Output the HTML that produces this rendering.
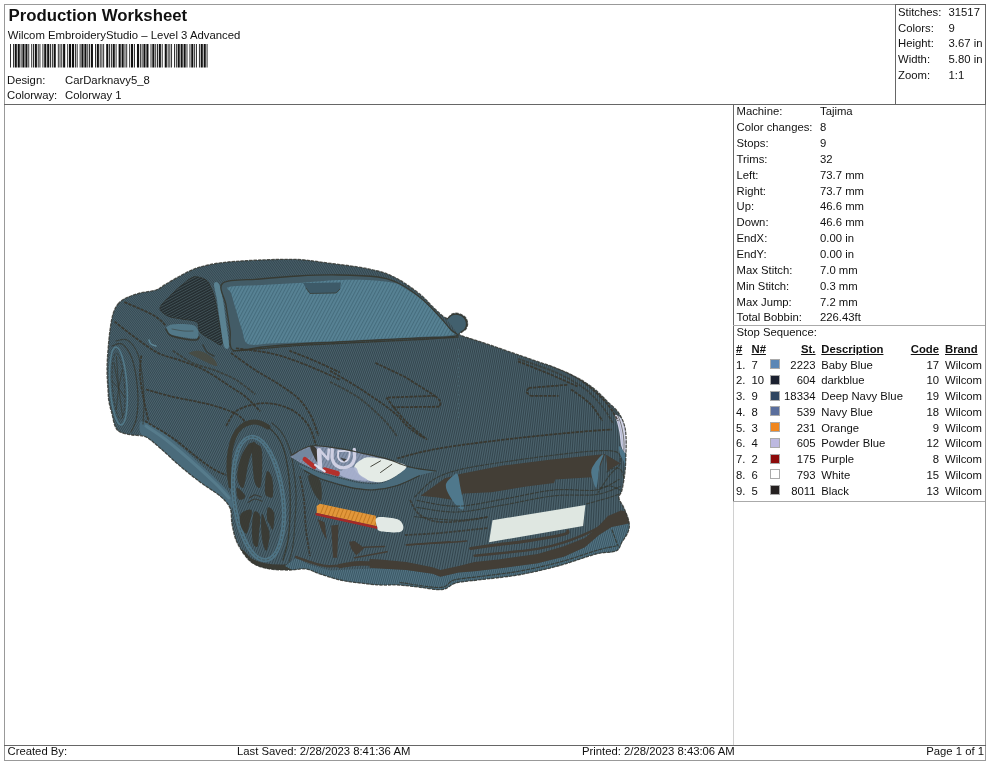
<!DOCTYPE html>
<html><head><meta charset="utf-8">
<style>
html,body{margin:0;padding:0;background:#fff;}
body{width:990px;height:762px;position:relative;overflow:hidden;font-family:"Liberation Sans",sans-serif;font-size:11.3px;color:#111;}
.t{position:absolute;white-space:nowrap;line-height:13px;}
#txt{position:absolute;left:0;top:0;width:990px;height:762px;will-change:transform;transform:translateZ(0);}
.ln{position:absolute;background:#999;}
.dk{background:#666;}
.b{font-weight:bold;}
.u{text-decoration:underline;}
.r{text-align:right;}
.sw{position:absolute;width:10px;height:10px;border:1px solid #aaa;box-sizing:border-box;}
</style></head><body>
<!-- frame lines -->
<div class="ln" style="left:4px;top:4px;width:982px;height:1px"></div>
<div class="ln" style="left:4px;top:4px;width:1px;height:757px"></div>
<div class="ln" style="left:985px;top:4px;width:1px;height:757px"></div>
<div class="ln dk" style="left:4px;top:104px;width:982px;height:1px"></div>
<div class="ln dk" style="left:895px;top:4px;width:1px;height:100px"></div>
<div class="ln dk" style="left:985px;top:4px;width:1px;height:100px"></div>
<div class="ln dk" style="left:895px;top:4px;width:91px;height:1px"></div>
<div class="ln dk" style="left:733px;top:104px;width:1px;height:398px"></div>
<div class="ln" style="left:733px;top:502px;width:1px;height:243px;background:#d0d0d0"></div>
<div class="ln" style="left:733px;top:325px;width:252px;height:1px;background:#aaa"></div>
<div class="ln" style="left:733px;top:501px;width:252px;height:1px;background:#aaa"></div>
<div class="ln dk" style="left:4px;top:745px;width:982px;height:1px"></div>
<div class="ln" style="left:4px;top:760px;width:982px;height:1px"></div>

<div id="txt">
<div class="t b" style="left:8.5px;top:5.5px;font-size:16.8px;line-height:19px">Production Worksheet</div>
<div class="t " style="left:7.7px;top:28.65px;font-size:11.35px">Wilcom EmbroideryStudio – Level 3 Advanced</div>
<div class="t " style="left:7px;top:73.55px;">Design:</div>
<div class="t " style="left:65px;top:73.55px;">CarDarknavy5_8</div>
<div class="t " style="left:7px;top:89.35px;">Colorway:</div>
<div class="t " style="left:65px;top:89.35px;">Colorway 1</div>
<svg width="220" height="30" viewBox="0 40 220 30" style="position:absolute;left:0;top:40px"><path d="M10.00,44h0.87v23.5h-0.87zM12.97,44h0.87v23.5h-0.87zM14.71,44h2.10v23.5h-2.10zM17.68,44h2.10v23.5h-2.10zM20.65,44h0.87v23.5h-0.87zM22.40,44h2.10v23.5h-2.10zM25.37,44h2.10v23.5h-2.10zM28.34,44h0.87v23.5h-0.87zM31.30,44h0.87v23.5h-0.87zM33.05,44h0.87v23.5h-0.87zM34.80,44h2.10v23.5h-2.10zM37.77,44h0.87v23.5h-0.87zM39.51,44h0.87v23.5h-0.87zM42.48,44h0.87v23.5h-0.87zM44.23,44h2.10v23.5h-2.10zM47.19,44h2.10v23.5h-2.10zM50.16,44h0.87v23.5h-0.87zM51.91,44h0.87v23.5h-0.87zM53.66,44h2.10v23.5h-2.10zM57.85,44h0.87v23.5h-0.87zM59.59,44h0.87v23.5h-0.87zM61.34,44h0.87v23.5h-0.87zM63.09,44h2.10v23.5h-2.10zM67.28,44h0.87v23.5h-0.87zM69.02,44h2.10v23.5h-2.10zM71.99,44h2.10v23.5h-2.10zM74.96,44h0.87v23.5h-0.87zM76.71,44h0.87v23.5h-0.87zM79.68,44h0.87v23.5h-0.87zM81.42,44h2.10v23.5h-2.10zM84.39,44h2.10v23.5h-2.10zM87.36,44h0.87v23.5h-0.87zM89.10,44h0.87v23.5h-0.87zM90.85,44h2.10v23.5h-2.10zM95.04,44h0.87v23.5h-0.87zM96.79,44h2.10v23.5h-2.10zM99.76,44h0.87v23.5h-0.87zM101.50,44h0.87v23.5h-0.87zM103.25,44h0.87v23.5h-0.87zM106.22,44h2.10v23.5h-2.10zM109.19,44h0.87v23.5h-0.87zM110.93,44h0.87v23.5h-0.87zM112.68,44h2.10v23.5h-2.10zM115.65,44h0.87v23.5h-0.87zM118.62,44h2.10v23.5h-2.10zM121.58,44h2.10v23.5h-2.10zM124.55,44h0.87v23.5h-0.87zM126.30,44h0.87v23.5h-0.87zM129.27,44h0.87v23.5h-0.87zM131.01,44h2.10v23.5h-2.10zM133.98,44h0.87v23.5h-0.87zM136.95,44h2.10v23.5h-2.10zM139.92,44h0.87v23.5h-0.87zM141.67,44h0.87v23.5h-0.87zM143.41,44h2.10v23.5h-2.10zM146.38,44h2.10v23.5h-2.10zM150.57,44h0.87v23.5h-0.87zM152.32,44h2.10v23.5h-2.10zM155.29,44h0.87v23.5h-0.87zM157.03,44h0.87v23.5h-0.87zM158.78,44h2.10v23.5h-2.10zM161.75,44h0.87v23.5h-0.87zM164.72,44h2.10v23.5h-2.10zM167.69,44h0.87v23.5h-0.87zM169.43,44h0.87v23.5h-0.87zM171.18,44h0.87v23.5h-0.87zM174.15,44h0.87v23.5h-0.87zM175.89,44h0.87v23.5h-0.87zM177.64,44h2.10v23.5h-2.10zM180.61,44h2.10v23.5h-2.10zM183.58,44h2.10v23.5h-2.10zM186.55,44h0.87v23.5h-0.87zM189.51,44h0.87v23.5h-0.87zM191.26,44h2.10v23.5h-2.10zM194.23,44h0.87v23.5h-0.87zM195.97,44h0.87v23.5h-0.87zM198.94,44h0.87v23.5h-0.87zM200.69,44h2.10v23.5h-2.10zM203.66,44h2.10v23.5h-2.10zM206.63,44h0.87v23.5h-0.87z" fill="#111"/></svg>
<div class="t " style="left:898px;top:5.65px;">Stitches:</div>
<div class="t " style="left:948.5px;top:5.65px;">31517</div>
<div class="t " style="left:898px;top:21.55px;">Colors:</div>
<div class="t " style="left:948.5px;top:21.55px;">9</div>
<div class="t " style="left:898px;top:37.45px;">Height:</div>
<div class="t " style="left:948.5px;top:37.45px;">3.67 in</div>
<div class="t " style="left:898px;top:53.35px;">Width:</div>
<div class="t " style="left:948.5px;top:53.35px;">5.80 in</div>
<div class="t " style="left:898px;top:69.25px;">Zoom:</div>
<div class="t " style="left:948.5px;top:69.25px;">1:1</div>
<div class="t " style="left:736.5px;top:105.15px;">Machine:</div>
<div class="t " style="left:820px;top:105.15px;">Tajima</div>
<div class="t " style="left:736.5px;top:121.02px;">Color changes:</div>
<div class="t " style="left:820px;top:121.02px;">8</div>
<div class="t " style="left:736.5px;top:136.89px;">Stops:</div>
<div class="t " style="left:820px;top:136.89px;">9</div>
<div class="t " style="left:736.5px;top:152.76px;">Trims:</div>
<div class="t " style="left:820px;top:152.76px;">32</div>
<div class="t " style="left:736.5px;top:168.63px;">Left:</div>
<div class="t " style="left:820px;top:168.63px;">73.7 mm</div>
<div class="t " style="left:736.5px;top:184.50px;">Right:</div>
<div class="t " style="left:820px;top:184.50px;">73.7 mm</div>
<div class="t " style="left:736.5px;top:200.37px;">Up:</div>
<div class="t " style="left:820px;top:200.37px;">46.6 mm</div>
<div class="t " style="left:736.5px;top:216.24px;">Down:</div>
<div class="t " style="left:820px;top:216.24px;">46.6 mm</div>
<div class="t " style="left:736.5px;top:232.11px;">EndX:</div>
<div class="t " style="left:820px;top:232.11px;">0.00 in</div>
<div class="t " style="left:736.5px;top:247.98px;">EndY:</div>
<div class="t " style="left:820px;top:247.98px;">0.00 in</div>
<div class="t " style="left:736.5px;top:263.85px;">Max Stitch:</div>
<div class="t " style="left:820px;top:263.85px;">7.0 mm</div>
<div class="t " style="left:736.5px;top:279.72px;">Min Stitch:</div>
<div class="t " style="left:820px;top:279.72px;">0.3 mm</div>
<div class="t " style="left:736.5px;top:295.59px;">Max Jump:</div>
<div class="t " style="left:820px;top:295.59px;">7.2 mm</div>
<div class="t " style="left:736.5px;top:311.46px;">Total Bobbin:</div>
<div class="t " style="left:820px;top:311.46px;">226.43ft</div>
<div class="t " style="left:736.5px;top:326.45px;">Stop Sequence:</div>
<div class="t b u" style="left:736px;top:343.15px;">#</div>
<div class="t b u" style="left:751.5px;top:343.15px;">N#</div>
<div class="t r b u" style="right:174.5px;top:343.15px;">St.</div>
<div class="t b u" style="left:821.3px;top:343.15px;">Description</div>
<div class="t r b u" style="right:51px;top:343.15px;">Code</div>
<div class="t b u" style="left:945px;top:343.15px;">Brand</div>
<div class="t " style="left:736px;top:358.55px;">1.</div>
<div class="t " style="left:751.5px;top:358.55px;">7</div>
<div class="sw" style="left:769.5px;top:359.00px;background:#5b86b5"></div>
<div class="t r " style="right:174.5px;top:358.55px;">2223</div>
<div class="t " style="left:821.3px;top:358.55px;">Baby Blue</div>
<div class="t r " style="right:51px;top:358.55px;">17</div>
<div class="t " style="left:945px;top:358.55px;">Wilcom</div>
<div class="t " style="left:736px;top:374.33px;">2.</div>
<div class="t " style="left:751.5px;top:374.33px;">10</div>
<div class="sw" style="left:769.5px;top:374.78px;background:#1c2130"></div>
<div class="t r " style="right:174.5px;top:374.33px;">604</div>
<div class="t " style="left:821.3px;top:374.33px;">darkblue</div>
<div class="t r " style="right:51px;top:374.33px;">10</div>
<div class="t " style="left:945px;top:374.33px;">Wilcom</div>
<div class="t " style="left:736px;top:390.11px;">3.</div>
<div class="t " style="left:751.5px;top:390.11px;">9</div>
<div class="sw" style="left:769.5px;top:390.56px;background:#2f4560"></div>
<div class="t r " style="right:174.5px;top:390.11px;">18334</div>
<div class="t " style="left:821.3px;top:390.11px;">Deep Navy Blue</div>
<div class="t r " style="right:51px;top:390.11px;">19</div>
<div class="t " style="left:945px;top:390.11px;">Wilcom</div>
<div class="t " style="left:736px;top:405.89px;">4.</div>
<div class="t " style="left:751.5px;top:405.89px;">8</div>
<div class="sw" style="left:769.5px;top:406.34px;background:#5a6e9c"></div>
<div class="t r " style="right:174.5px;top:405.89px;">539</div>
<div class="t " style="left:821.3px;top:405.89px;">Navy Blue</div>
<div class="t r " style="right:51px;top:405.89px;">18</div>
<div class="t " style="left:945px;top:405.89px;">Wilcom</div>
<div class="t " style="left:736px;top:421.67px;">5.</div>
<div class="t " style="left:751.5px;top:421.67px;">3</div>
<div class="sw" style="left:769.5px;top:422.12px;background:#f0861e"></div>
<div class="t r " style="right:174.5px;top:421.67px;">231</div>
<div class="t " style="left:821.3px;top:421.67px;">Orange</div>
<div class="t r " style="right:51px;top:421.67px;">9</div>
<div class="t " style="left:945px;top:421.67px;">Wilcom</div>
<div class="t " style="left:736px;top:437.45px;">6.</div>
<div class="t " style="left:751.5px;top:437.45px;">4</div>
<div class="sw" style="left:769.5px;top:437.90px;background:#bdb9e0"></div>
<div class="t r " style="right:174.5px;top:437.45px;">605</div>
<div class="t " style="left:821.3px;top:437.45px;">Powder Blue</div>
<div class="t r " style="right:51px;top:437.45px;">12</div>
<div class="t " style="left:945px;top:437.45px;">Wilcom</div>
<div class="t " style="left:736px;top:453.23px;">7.</div>
<div class="t " style="left:751.5px;top:453.23px;">2</div>
<div class="sw" style="left:769.5px;top:453.68px;background:#8c0a0a"></div>
<div class="t r " style="right:174.5px;top:453.23px;">175</div>
<div class="t " style="left:821.3px;top:453.23px;">Purple</div>
<div class="t r " style="right:51px;top:453.23px;">8</div>
<div class="t " style="left:945px;top:453.23px;">Wilcom</div>
<div class="t " style="left:736px;top:469.01px;">8.</div>
<div class="t " style="left:751.5px;top:469.01px;">6</div>
<div class="sw" style="left:769.5px;top:469.46px;background:#ffffff"></div>
<div class="t r " style="right:174.5px;top:469.01px;">793</div>
<div class="t " style="left:821.3px;top:469.01px;">White</div>
<div class="t r " style="right:51px;top:469.01px;">15</div>
<div class="t " style="left:945px;top:469.01px;">Wilcom</div>
<div class="t " style="left:736px;top:484.79px;">9.</div>
<div class="t " style="left:751.5px;top:484.79px;">5</div>
<div class="sw" style="left:769.5px;top:485.24px;background:#262222"></div>
<div class="t r " style="right:174.5px;top:484.79px;">8011</div>
<div class="t " style="left:821.3px;top:484.79px;">Black</div>
<div class="t r " style="right:51px;top:484.79px;">13</div>
<div class="t " style="left:945px;top:484.79px;">Wilcom</div>
<div class="t " style="left:7.5px;top:745.35px;">Created By:</div>
<div class="t " style="left:237px;top:745.35px;">Last Saved: 2/28/2023 8:41:36 AM</div>
<div class="t " style="left:582px;top:745.35px;">Printed: 2/28/2023 8:43:06 AM</div>
<div class="t r " style="right:6px;top:745.35px;">Page 1 of 1</div>
</div>
<svg width="990" height="762" viewBox="0 0 990 762" style="position:absolute;left:0;top:0">
<defs>
<pattern id="tw" width="2" height="8" patternUnits="userSpaceOnUse" patternTransform="rotate(15)"><rect x="0" width="1" height="8" fill="#1c2f38" opacity="0.55"/><rect x="1" width="1" height="8" fill="#86a6b0" opacity="0.28"/></pattern>
<pattern id="tw2" width="3" height="3" patternUnits="userSpaceOnUse" patternTransform="rotate(-62)"><rect y="0" width="3" height="1.1" fill="#000" opacity="0.13"/><rect y="1.6" width="3" height="0.8" fill="#fff" opacity="0.10"/></pattern>
<pattern id="st" width="2.4" height="2.4" patternUnits="userSpaceOnUse" patternTransform="rotate(-28)"><rect y="0" width="2.4" height="1.0" fill="#6b8a92" opacity="0.4"/></pattern>
<linearGradient id="lg" gradientUnits="userSpaceOnUse" x1="100" y1="300" x2="430" y2="420"><stop offset="0" stop-color="#6aa3bf" stop-opacity="0.05"/><stop offset="0.55" stop-color="#6aa3bf" stop-opacity="0.03"/><stop offset="1" stop-color="#6aa3bf" stop-opacity="0"/></linearGradient>
<clipPath id="bodyclip"><path d="M118.0,304.0C120.2,301.3 122.3,299.8 126.0,298.0C129.7,296.2 135.0,294.3 140.0,293.0C145.0,291.7 151.7,291.5 156.0,290.0C160.3,288.5 162.0,286.3 166.0,284.0C170.0,281.7 175.3,278.5 180.0,276.0C184.7,273.5 189.3,270.8 194.0,269.0C198.7,267.2 202.3,266.2 208.0,265.0C213.7,263.8 219.3,262.8 228.0,262.0C236.7,261.2 248.3,260.4 260.0,260.0C271.7,259.6 286.7,259.0 298.0,259.5C309.3,260.0 318.0,261.8 328.0,263.0C338.0,264.2 349.7,265.7 358.0,267.0C366.3,268.3 372.3,269.5 378.0,271.0C383.7,272.5 387.3,273.8 392.0,276.0C396.7,278.2 401.0,280.7 406.0,284.0C411.0,287.3 417.3,292.0 422.0,296.0C426.7,300.0 430.0,304.3 434.0,308.0C438.0,311.7 443.0,317.0 446.0,318.0C449.0,319.0 450.0,314.8 452.0,314.0C454.0,313.2 455.8,313.0 458.0,313.5C460.2,314.0 463.4,315.4 465.0,317.0C466.6,318.6 467.4,321.0 467.6,323.0C467.8,325.0 466.9,327.5 466.0,329.0C465.1,330.5 463.0,331.0 462.0,332.0C461.0,333.0 457.3,333.5 460.0,335.0C462.7,336.5 472.0,339.0 478.0,341.0C484.0,343.0 489.7,344.8 496.0,347.0C502.3,349.2 509.3,351.7 516.0,354.0C522.7,356.3 529.3,358.7 536.0,361.0C542.7,363.3 549.3,365.3 556.0,368.0C562.7,370.7 570.0,373.8 576.0,377.0C582.0,380.2 587.7,383.8 592.0,387.0C596.3,390.2 599.3,393.5 602.0,396.0C604.7,398.5 605.3,399.3 608.0,402.0C610.7,404.7 615.3,408.3 618.0,412.0C620.7,415.7 622.7,420.0 624.0,424.0C625.3,428.0 625.7,431.3 626.0,436.0C626.3,440.7 626.2,446.0 626.0,452.0C625.8,458.0 625.7,465.7 625.0,472.0C624.3,478.3 623.0,485.7 622.0,490.0C621.0,494.3 618.7,495.0 619.0,498.0C619.3,501.0 622.3,504.0 624.0,508.0C625.7,512.0 628.3,518.0 629.0,522.0C629.7,526.0 629.2,528.7 628.0,532.0C626.8,535.3 624.0,538.8 622.0,542.0C620.0,545.2 620.3,549.0 616.0,551.0C611.7,553.0 605.7,551.5 596.0,554.0C586.3,556.5 571.0,562.5 558.0,566.0C545.0,569.5 531.3,572.7 518.0,575.0C504.7,577.3 488.3,578.7 478.0,580.0C467.7,581.3 462.0,581.4 456.0,583.0C450.0,584.6 448.3,588.9 442.0,589.6C435.7,590.3 425.3,587.8 418.0,587.0C410.7,586.2 404.3,585.3 398.0,585.0C391.7,584.7 386.3,585.3 380.0,585.0C373.7,584.7 366.7,583.8 360.0,583.0C353.3,582.2 346.7,581.5 340.0,580.0C333.3,578.5 325.7,575.8 320.0,574.0C314.3,572.2 311.0,569.7 306.0,569.0C301.0,568.3 296.0,570.0 290.0,570.0C284.0,570.0 276.0,570.0 270.0,569.0C264.0,568.0 258.3,566.5 254.0,564.0C249.7,561.5 247.0,558.0 244.0,554.0C241.0,550.0 238.0,545.0 236.0,540.0C234.0,535.0 233.0,529.3 232.0,524.0C231.0,518.7 232.0,512.7 230.0,508.0C228.0,503.3 225.0,500.3 220.0,496.0C215.0,491.7 206.7,487.0 200.0,482.0C193.3,477.0 186.7,471.7 180.0,466.0C173.3,460.3 165.7,452.8 160.0,448.0C154.3,443.2 150.7,439.2 146.0,437.0C141.3,434.8 136.3,435.8 132.0,435.0C127.7,434.2 122.8,433.5 120.0,432.0C117.2,430.5 116.3,429.0 115.0,426.0C113.7,423.0 113.0,418.0 112.0,414.0C111.0,410.0 109.7,406.0 109.0,402.0C108.3,398.0 108.3,395.3 108.0,390.0C107.7,384.7 107.0,376.7 107.0,370.0C107.0,363.3 107.5,356.7 108.0,350.0C108.5,343.3 109.2,336.0 110.0,330.0C110.8,324.0 111.7,318.3 113.0,314.0C114.3,309.7 115.8,306.7 118.0,304.0Z"/></clipPath>
</defs>
<path d="M118.0,304.0C120.2,301.3 122.3,299.8 126.0,298.0C129.7,296.2 135.0,294.3 140.0,293.0C145.0,291.7 151.7,291.5 156.0,290.0C160.3,288.5 162.0,286.3 166.0,284.0C170.0,281.7 175.3,278.5 180.0,276.0C184.7,273.5 189.3,270.8 194.0,269.0C198.7,267.2 202.3,266.2 208.0,265.0C213.7,263.8 219.3,262.8 228.0,262.0C236.7,261.2 248.3,260.4 260.0,260.0C271.7,259.6 286.7,259.0 298.0,259.5C309.3,260.0 318.0,261.8 328.0,263.0C338.0,264.2 349.7,265.7 358.0,267.0C366.3,268.3 372.3,269.5 378.0,271.0C383.7,272.5 387.3,273.8 392.0,276.0C396.7,278.2 401.0,280.7 406.0,284.0C411.0,287.3 417.3,292.0 422.0,296.0C426.7,300.0 430.0,304.3 434.0,308.0C438.0,311.7 443.0,317.0 446.0,318.0C449.0,319.0 450.0,314.8 452.0,314.0C454.0,313.2 455.8,313.0 458.0,313.5C460.2,314.0 463.4,315.4 465.0,317.0C466.6,318.6 467.4,321.0 467.6,323.0C467.8,325.0 466.9,327.5 466.0,329.0C465.1,330.5 463.0,331.0 462.0,332.0C461.0,333.0 457.3,333.5 460.0,335.0C462.7,336.5 472.0,339.0 478.0,341.0C484.0,343.0 489.7,344.8 496.0,347.0C502.3,349.2 509.3,351.7 516.0,354.0C522.7,356.3 529.3,358.7 536.0,361.0C542.7,363.3 549.3,365.3 556.0,368.0C562.7,370.7 570.0,373.8 576.0,377.0C582.0,380.2 587.7,383.8 592.0,387.0C596.3,390.2 599.3,393.5 602.0,396.0C604.7,398.5 605.3,399.3 608.0,402.0C610.7,404.7 615.3,408.3 618.0,412.0C620.7,415.7 622.7,420.0 624.0,424.0C625.3,428.0 625.7,431.3 626.0,436.0C626.3,440.7 626.2,446.0 626.0,452.0C625.8,458.0 625.7,465.7 625.0,472.0C624.3,478.3 623.0,485.7 622.0,490.0C621.0,494.3 618.7,495.0 619.0,498.0C619.3,501.0 622.3,504.0 624.0,508.0C625.7,512.0 628.3,518.0 629.0,522.0C629.7,526.0 629.2,528.7 628.0,532.0C626.8,535.3 624.0,538.8 622.0,542.0C620.0,545.2 620.3,549.0 616.0,551.0C611.7,553.0 605.7,551.5 596.0,554.0C586.3,556.5 571.0,562.5 558.0,566.0C545.0,569.5 531.3,572.7 518.0,575.0C504.7,577.3 488.3,578.7 478.0,580.0C467.7,581.3 462.0,581.4 456.0,583.0C450.0,584.6 448.3,588.9 442.0,589.6C435.7,590.3 425.3,587.8 418.0,587.0C410.7,586.2 404.3,585.3 398.0,585.0C391.7,584.7 386.3,585.3 380.0,585.0C373.7,584.7 366.7,583.8 360.0,583.0C353.3,582.2 346.7,581.5 340.0,580.0C333.3,578.5 325.7,575.8 320.0,574.0C314.3,572.2 311.0,569.7 306.0,569.0C301.0,568.3 296.0,570.0 290.0,570.0C284.0,570.0 276.0,570.0 270.0,569.0C264.0,568.0 258.3,566.5 254.0,564.0C249.7,561.5 247.0,558.0 244.0,554.0C241.0,550.0 238.0,545.0 236.0,540.0C234.0,535.0 233.0,529.3 232.0,524.0C231.0,518.7 232.0,512.7 230.0,508.0C228.0,503.3 225.0,500.3 220.0,496.0C215.0,491.7 206.7,487.0 200.0,482.0C193.3,477.0 186.7,471.7 180.0,466.0C173.3,460.3 165.7,452.8 160.0,448.0C154.3,443.2 150.7,439.2 146.0,437.0C141.3,434.8 136.3,435.8 132.0,435.0C127.7,434.2 122.8,433.5 120.0,432.0C117.2,430.5 116.3,429.0 115.0,426.0C113.7,423.0 113.0,418.0 112.0,414.0C111.0,410.0 109.7,406.0 109.0,402.0C108.3,398.0 108.3,395.3 108.0,390.0C107.7,384.7 107.0,376.7 107.0,370.0C107.0,363.3 107.5,356.7 108.0,350.0C108.5,343.3 109.2,336.0 110.0,330.0C110.8,324.0 111.7,318.3 113.0,314.0C114.3,309.7 115.8,306.7 118.0,304.0Z" fill="#4b626c"/>
<g clip-path="url(#bodyclip)"><path d="M-146.05,595L122.55,255M-143.41,595L124.29,255M-140.78,595L126.02,255M-138.14,595L127.76,255M-135.50,595L129.49,255M-132.87,595L131.23,255M-130.23,595L132.96,255M-127.59,595L134.70,255M-124.96,595L136.44,255M-122.32,595L138.17,255M-119.68,595L139.91,255M-117.05,595L141.64,255M-114.41,595L143.38,255M-111.77,595L145.11,255M-109.14,595L146.85,255M-106.50,595L148.59,255M-103.86,595L150.32,255M-101.23,595L152.06,255M-98.59,595L153.79,255M-95.95,595L155.53,255M-93.31,595L157.27,255M-90.68,595L159.00,255M-88.04,595L160.74,255M-85.40,595L162.47,255M-82.77,595L164.21,255M-80.13,595L165.94,255M-77.49,595L167.68,255M-74.86,595L169.42,255M-72.22,595L171.15,255M-69.58,595L172.89,255M-66.95,595L174.62,255M-64.31,595L176.36,255M-61.67,595L178.09,255M-59.04,595L179.83,255M-56.40,595L181.57,255M-53.76,595L183.30,255M-51.13,595L185.04,255M-48.49,595L186.77,255M-45.85,595L188.51,255M-43.22,595L190.24,255M-40.58,595L191.98,255M-37.94,595L193.72,255M-35.31,595L195.45,255M-32.67,595L197.19,255M-30.03,595L198.92,255M-27.40,595L200.66,255M-24.76,595L202.39,255M-22.12,595L204.13,255M-19.49,595L205.87,255M-16.85,595L207.60,255M-14.21,595L209.34,255M-11.58,595L211.07,255M-8.94,595L212.81,255M-6.30,595L214.54,255M-3.67,595L216.28,255M-1.03,595L218.02,255M1.61,595L219.75,255M4.24,595L221.49,255M6.88,595L223.22,255M9.52,595L224.96,255M12.16,595L226.70,255M14.79,595L228.43,255M17.43,595L230.17,255M20.07,595L231.90,255M22.70,595L233.64,255M25.34,595L235.37,255M27.98,595L237.11,255M30.61,595L238.85,255M33.25,595L240.58,255M35.89,595L242.32,255M38.52,595L244.05,255M41.16,595L245.79,255M43.80,595L247.52,255M46.43,595L249.26,255M49.07,595L251.00,255M51.71,595L252.73,255M54.34,595L254.47,255M56.98,595L256.20,255M59.62,595L257.94,255M62.25,595L259.67,255M64.89,595L261.41,255M67.53,595L263.15,255M70.16,595L264.88,255M72.80,595L266.62,255M75.44,595L268.35,255M78.07,595L270.09,255M80.71,595L271.82,255M83.35,595L273.56,255M85.98,595L275.30,255M88.62,595L277.03,255M91.26,595L278.77,255M93.89,595L280.50,255M96.53,595L282.24,255M99.17,595L283.97,255M101.80,595L285.71,255M104.44,595L287.45,255M107.08,595L289.18,255M109.71,595L290.92,255M112.35,595L292.65,255M114.99,595L294.39,255M117.63,595L296.13,255M120.26,595L297.86,255M122.90,595L299.60,255M125.54,595L301.33,255M128.17,595L303.07,255M130.81,595L304.80,255M133.45,595L306.54,255M136.08,595L308.28,255M138.72,595L310.01,255M141.36,595L311.75,255M143.99,595L313.48,255M146.63,595L315.22,255M149.27,595L316.95,255M151.90,595L318.69,255M154.54,595L320.43,255M157.18,595L322.16,255M159.81,595L323.90,255M162.45,595L325.63,255M165.09,595L327.37,255M167.72,595L329.10,255M170.36,595L330.84,255M173.00,595L332.58,255M175.63,595L334.31,255M178.27,595L336.05,255M180.91,595L337.78,255M183.54,595L339.52,255M186.18,595L341.25,255M188.82,595L342.99,255M191.45,595L344.73,255M194.09,595L346.46,255M196.73,595L348.20,255M199.36,595L349.93,255M202.00,595L351.67,255M204.64,595L353.40,255M207.27,595L355.14,255M209.91,595L356.88,255M212.55,595L358.61,255M215.18,595L360.35,255M217.82,595L362.08,255M220.46,595L363.82,255M223.10,595L365.56,255M225.73,595L367.29,255M228.37,595L369.03,255M231.01,595L370.76,255M233.64,595L372.50,255M236.28,595L374.23,255M238.92,595L375.97,255M241.55,595L377.71,255M244.19,595L379.44,255M246.83,595L381.18,255M249.46,595L382.91,255M252.10,595L384.65,255M254.74,595L386.38,255M257.37,595L388.12,255M260.01,595L389.86,255M262.65,595L391.59,255M265.28,595L393.33,255M267.92,595L395.06,255M270.56,595L396.80,255M273.19,595L398.53,255M275.83,595L400.27,255M278.47,595L402.01,255M281.10,595L403.74,255M283.74,595L405.48,255M286.38,595L407.21,255M289.01,595L408.95,255M291.65,595L410.68,255M294.29,595L412.42,255M296.92,595L414.16,255M299.56,595L415.89,255M302.20,595L417.63,255M304.83,595L419.36,255M307.47,595L421.10,255M310.11,595L422.83,255M312.74,595L424.57,255M315.38,595L426.31,255M318.02,595L428.04,255M320.65,595L429.78,255M323.29,595L431.51,255M325.93,595L433.25,255M328.56,595L434.98,255M331.20,595L436.72,255M333.84,595L438.46,255M336.48,595L440.19,255M339.11,595L441.93,255M341.75,595L443.66,255M344.39,595L445.40,255M347.02,595L447.14,255M349.66,595L448.87,255M352.30,595L450.61,255M354.93,595L452.34,255M357.57,595L454.08,255M360.21,595L455.81,255M362.84,595L457.55,255M365.48,595L459.29,255M368.12,595L461.02,255M370.75,595L462.76,255M373.39,595L464.49,255M376.03,595L466.23,255M378.66,595L467.96,255M381.30,595L469.70,255M383.94,595L471.44,255M386.57,595L473.17,255M389.21,595L474.91,255M391.85,595L476.64,255M394.48,595L478.38,255M397.12,595L480.11,255M399.76,595L481.85,255M402.39,595L483.59,255M405.03,595L485.32,255M407.67,595L487.06,255M410.30,595L488.79,255M412.94,595L490.53,255M415.58,595L492.26,255M418.21,595L494.00,255M420.85,595L495.74,255M423.49,595L497.47,255M426.12,595L499.21,255M428.76,595L500.94,255M431.40,595L502.68,255M434.03,595L504.41,255M436.67,595L506.15,255M439.31,595L507.89,255M441.95,595L509.62,255M444.58,595L511.36,255M447.22,595L513.09,255M449.86,595L514.83,255M452.49,595L516.57,255M455.13,595L518.30,255M457.77,595L520.04,255M460.40,595L521.77,255M463.04,595L523.51,255M465.68,595L525.24,255M468.31,595L526.98,255M470.95,595L528.72,255M473.59,595L530.45,255M476.22,595L532.19,255M478.86,595L533.92,255M481.50,595L535.66,255M484.13,595L537.39,255M486.77,595L539.13,255M489.41,595L540.87,255M492.04,595L542.60,255M494.68,595L544.34,255M497.32,595L546.07,255M499.95,595L547.81,255M502.59,595L549.54,255M505.23,595L551.28,255M507.86,595L553.02,255M510.50,595L554.75,255M513.14,595L556.49,255M515.77,595L558.22,255M518.41,595L559.96,255M521.05,595L561.69,255M523.68,595L563.43,255M526.32,595L565.17,255M528.96,595L566.90,255M531.59,595L568.64,255M534.23,595L570.37,255M536.87,595L572.11,255M539.50,595L573.84,255M542.14,595L575.58,255M544.78,595L577.32,255M547.42,595L579.05,255M550.05,595L580.79,255M552.69,595L582.52,255M555.33,595L584.26,255M557.96,595L586.00,255M560.60,595L587.73,255M563.24,595L589.47,255M565.87,595L591.20,255M568.51,595L592.94,255M571.15,595L594.67,255M573.78,595L596.41,255M576.42,595L598.15,255M579.06,595L599.88,255M581.69,595L601.62,255M584.33,595L603.35,255M586.97,595L605.09,255M589.60,595L606.82,255M592.24,595L608.56,255M594.88,595L610.30,255M597.51,595L612.03,255M600.15,595L613.77,255M602.79,595L615.50,255M605.42,595L617.24,255M608.06,595L618.97,255M610.70,595L620.71,255M613.33,595L622.45,255M615.97,595L624.18,255M618.61,595L625.92,255M621.24,595L627.65,255M623.88,595L629.39,255M626.52,595L631.12,255M629.15,595L632.86,255M631.79,595L634.60,255M634.43,595L636.33,255M637.06,595L638.07,255M639.70,595L639.80,255" stroke="#1e2a30" stroke-width="1" opacity="0.5" fill="none"/></g>
<path d="M118.0,304.0C120.2,301.3 122.3,299.8 126.0,298.0C129.7,296.2 135.0,294.3 140.0,293.0C145.0,291.7 151.7,291.5 156.0,290.0C160.3,288.5 162.0,286.3 166.0,284.0C170.0,281.7 175.3,278.5 180.0,276.0C184.7,273.5 189.3,270.8 194.0,269.0C198.7,267.2 202.3,266.2 208.0,265.0C213.7,263.8 219.3,262.8 228.0,262.0C236.7,261.2 248.3,260.4 260.0,260.0C271.7,259.6 286.7,259.0 298.0,259.5C309.3,260.0 318.0,261.8 328.0,263.0C338.0,264.2 349.7,265.7 358.0,267.0C366.3,268.3 372.3,269.5 378.0,271.0C383.7,272.5 387.3,273.8 392.0,276.0C396.7,278.2 401.0,280.7 406.0,284.0C411.0,287.3 417.3,292.0 422.0,296.0C426.7,300.0 430.0,304.3 434.0,308.0C438.0,311.7 443.0,317.0 446.0,318.0C449.0,319.0 450.0,314.8 452.0,314.0C454.0,313.2 455.8,313.0 458.0,313.5C460.2,314.0 463.4,315.4 465.0,317.0C466.6,318.6 467.4,321.0 467.6,323.0C467.8,325.0 466.9,327.5 466.0,329.0C465.1,330.5 463.0,331.0 462.0,332.0C461.0,333.0 457.3,333.5 460.0,335.0C462.7,336.5 472.0,339.0 478.0,341.0C484.0,343.0 489.7,344.8 496.0,347.0C502.3,349.2 509.3,351.7 516.0,354.0C522.7,356.3 529.3,358.7 536.0,361.0C542.7,363.3 549.3,365.3 556.0,368.0C562.7,370.7 570.0,373.8 576.0,377.0C582.0,380.2 587.7,383.8 592.0,387.0C596.3,390.2 599.3,393.5 602.0,396.0C604.7,398.5 605.3,399.3 608.0,402.0C610.7,404.7 615.3,408.3 618.0,412.0C620.7,415.7 622.7,420.0 624.0,424.0C625.3,428.0 625.7,431.3 626.0,436.0C626.3,440.7 626.2,446.0 626.0,452.0C625.8,458.0 625.7,465.7 625.0,472.0C624.3,478.3 623.0,485.7 622.0,490.0C621.0,494.3 618.7,495.0 619.0,498.0C619.3,501.0 622.3,504.0 624.0,508.0C625.7,512.0 628.3,518.0 629.0,522.0C629.7,526.0 629.2,528.7 628.0,532.0C626.8,535.3 624.0,538.8 622.0,542.0C620.0,545.2 620.3,549.0 616.0,551.0C611.7,553.0 605.7,551.5 596.0,554.0C586.3,556.5 571.0,562.5 558.0,566.0C545.0,569.5 531.3,572.7 518.0,575.0C504.7,577.3 488.3,578.7 478.0,580.0C467.7,581.3 462.0,581.4 456.0,583.0C450.0,584.6 448.3,588.9 442.0,589.6C435.7,590.3 425.3,587.8 418.0,587.0C410.7,586.2 404.3,585.3 398.0,585.0C391.7,584.7 386.3,585.3 380.0,585.0C373.7,584.7 366.7,583.8 360.0,583.0C353.3,582.2 346.7,581.5 340.0,580.0C333.3,578.5 325.7,575.8 320.0,574.0C314.3,572.2 311.0,569.7 306.0,569.0C301.0,568.3 296.0,570.0 290.0,570.0C284.0,570.0 276.0,570.0 270.0,569.0C264.0,568.0 258.3,566.5 254.0,564.0C249.7,561.5 247.0,558.0 244.0,554.0C241.0,550.0 238.0,545.0 236.0,540.0C234.0,535.0 233.0,529.3 232.0,524.0C231.0,518.7 232.0,512.7 230.0,508.0C228.0,503.3 225.0,500.3 220.0,496.0C215.0,491.7 206.7,487.0 200.0,482.0C193.3,477.0 186.7,471.7 180.0,466.0C173.3,460.3 165.7,452.8 160.0,448.0C154.3,443.2 150.7,439.2 146.0,437.0C141.3,434.8 136.3,435.8 132.0,435.0C127.7,434.2 122.8,433.5 120.0,432.0C117.2,430.5 116.3,429.0 115.0,426.0C113.7,423.0 113.0,418.0 112.0,414.0C111.0,410.0 109.7,406.0 109.0,402.0C108.3,398.0 108.3,395.3 108.0,390.0C107.7,384.7 107.0,376.7 107.0,370.0C107.0,363.3 107.5,356.7 108.0,350.0C108.5,343.3 109.2,336.0 110.0,330.0C110.8,324.0 111.7,318.3 113.0,314.0C114.3,309.7 115.8,306.7 118.0,304.0Z" fill="url(#lg)"/>
<g clip-path="url(#bodyclip)">
<path d="M142.0,421.0C145.3,420.7 153.7,425.8 160.0,430.0C166.3,434.2 173.3,440.3 180.0,446.0C186.7,451.7 193.3,457.8 200.0,464.0C206.7,470.2 215.0,477.8 220.0,483.0C225.0,488.2 228.0,490.8 230.0,495.0C232.0,499.2 233.7,507.7 232.0,508.0C230.3,508.3 225.3,501.2 220.0,497.0C214.7,492.8 206.7,488.0 200.0,483.0C193.3,478.0 186.7,472.7 180.0,467.0C173.3,461.3 165.7,453.8 160.0,449.0C154.3,444.2 149.3,440.8 146.0,438.0C142.7,435.2 140.7,434.8 140.0,432.0C139.3,429.2 138.7,421.3 142.0,421.0Z" fill="#4a6b7b" opacity="1" />
<path d="M146.0,426.0C149.2,428.2 157.7,433.3 165.0,439.0C172.3,444.7 181.7,452.7 190.0,460.0C198.3,467.3 208.5,476.7 215.0,483.0C221.5,489.3 226.7,495.5 229.0,498.0" fill="none" stroke="#5b8293" stroke-width="3.0" opacity="0.7" stroke-linecap="round" stroke-linejoin="round"/>
<path d="M194.0,277.0C198.0,276.2 203.2,278.2 206.0,280.0C208.8,281.8 209.5,284.7 211.0,288.0C212.5,291.3 213.7,294.3 215.0,300.0C216.3,305.7 217.8,314.7 219.0,322.0C220.2,329.3 223.2,341.0 222.0,344.0C220.8,347.0 215.7,342.0 212.0,340.0C208.3,338.0 202.5,335.0 200.0,332.0C197.5,329.0 200.0,324.2 197.0,322.0C194.0,319.8 186.8,320.0 182.0,319.0C177.2,318.0 171.7,317.8 168.0,316.0C164.3,314.2 159.7,311.3 160.0,308.0C160.3,304.7 166.3,299.8 170.0,296.0C173.7,292.2 178.0,288.2 182.0,285.0C186.0,281.8 190.0,277.8 194.0,277.0Z" fill="#232b2e" opacity="1" />
<path d="M194.0,277.0C198.0,276.2 203.2,278.2 206.0,280.0C208.8,281.8 209.5,284.7 211.0,288.0C212.5,291.3 213.7,294.3 215.0,300.0C216.3,305.7 217.8,314.7 219.0,322.0C220.2,329.3 223.2,341.0 222.0,344.0C220.8,347.0 215.7,342.0 212.0,340.0C208.3,338.0 202.5,335.0 200.0,332.0C197.5,329.0 200.0,324.2 197.0,322.0C194.0,319.8 186.8,320.0 182.0,319.0C177.2,318.0 171.7,317.8 168.0,316.0C164.3,314.2 159.7,311.3 160.0,308.0C160.3,304.7 166.3,299.8 170.0,296.0C173.7,292.2 178.0,288.2 182.0,285.0C186.0,281.8 190.0,277.8 194.0,277.0Z" fill="none" stroke="#2a2c28" stroke-width="1.0" opacity="0.9" stroke-linecap="round" stroke-linejoin="round"/>
<path d="M194.0,277.0C198.0,276.2 203.2,278.2 206.0,280.0C208.8,281.8 209.5,284.7 211.0,288.0C212.5,291.3 213.7,294.3 215.0,300.0C216.3,305.7 217.8,314.7 219.0,322.0C220.2,329.3 223.2,341.0 222.0,344.0C220.8,347.0 215.7,342.0 212.0,340.0C208.3,338.0 202.5,335.0 200.0,332.0C197.5,329.0 200.0,324.2 197.0,322.0C194.0,319.8 186.8,320.0 182.0,319.0C177.2,318.0 171.7,317.8 168.0,316.0C164.3,314.2 159.7,311.3 160.0,308.0C160.3,304.7 166.3,299.8 170.0,296.0C173.7,292.2 178.0,288.2 182.0,285.0C186.0,281.8 190.0,277.8 194.0,277.0Z" fill="url(#st)"/>
<path d="M214.0,284.0C214.3,281.3 217.5,281.3 219.0,284.0C220.5,286.7 221.8,293.7 223.0,300.0C224.2,306.3 225.0,314.3 226.0,322.0C227.0,329.7 229.3,342.0 229.0,346.0C228.7,350.0 225.5,350.0 224.0,346.0C222.5,342.0 221.2,329.7 220.0,322.0C218.8,314.3 218.0,306.3 217.0,300.0C216.0,293.7 213.7,286.7 214.0,284.0Z" fill="#5a8292" opacity="1" />
<path d="M223.0,283.0C228.7,278.7 247.5,280.2 260.0,279.0C272.5,277.8 285.0,276.7 298.0,276.0C311.0,275.3 324.7,274.8 338.0,275.0C351.3,275.2 368.3,275.8 378.0,277.0C387.7,278.2 390.7,279.8 396.0,282.0C401.3,284.2 405.3,286.8 410.0,290.0C414.7,293.2 419.3,296.8 424.0,301.0C428.7,305.2 433.7,310.3 438.0,315.0C442.3,319.7 447.0,325.5 450.0,329.0C453.0,332.5 461.0,334.5 456.0,336.0C451.0,337.5 433.0,337.3 420.0,338.0C407.0,338.7 391.7,339.3 378.0,340.0C364.3,340.7 351.3,341.3 338.0,342.0C324.7,342.7 310.7,343.2 298.0,344.0C285.3,344.8 272.8,346.0 262.0,347.0C251.2,348.0 238.3,352.8 233.0,350.0C227.7,347.2 231.2,337.5 230.0,330.0C228.8,322.5 227.2,312.8 226.0,305.0C224.8,297.2 217.3,287.3 223.0,283.0Z" fill="#435c67" opacity="1" />
<path d="M223.0,283.0C228.7,278.7 247.5,280.2 260.0,279.0C272.5,277.8 285.0,276.7 298.0,276.0C311.0,275.3 324.7,274.8 338.0,275.0C351.3,275.2 368.3,275.8 378.0,277.0C387.7,278.2 390.7,279.8 396.0,282.0C401.3,284.2 405.3,286.8 410.0,290.0C414.7,293.2 419.3,296.8 424.0,301.0C428.7,305.2 433.7,310.3 438.0,315.0C442.3,319.7 447.0,325.5 450.0,329.0C453.0,332.5 461.0,334.5 456.0,336.0C451.0,337.5 433.0,337.3 420.0,338.0C407.0,338.7 391.7,339.3 378.0,340.0C364.3,340.7 351.3,341.3 338.0,342.0C324.7,342.7 310.7,343.2 298.0,344.0C285.3,344.8 272.8,346.0 262.0,347.0C251.2,348.0 238.3,352.8 233.0,350.0C227.7,347.2 231.2,337.5 230.0,330.0C228.8,322.5 227.2,312.8 226.0,305.0C224.8,297.2 217.3,287.3 223.0,283.0Z" fill="none" stroke="#36372f" stroke-width="1.3" opacity="0.9" stroke-linecap="round" stroke-linejoin="round"/>
<path d="M229.0,287.0C234.2,285.7 250.5,285.7 262.0,285.0C273.5,284.3 285.3,283.8 298.0,283.0C310.7,282.2 326.3,280.5 338.0,280.0C349.7,279.5 358.7,279.5 368.0,280.0C377.3,280.5 387.7,281.5 394.0,283.0C400.3,284.5 401.3,286.2 406.0,289.0C410.7,291.8 416.7,295.5 422.0,300.0C427.3,304.5 433.3,311.0 438.0,316.0C442.7,321.0 447.7,326.8 450.0,330.0C452.3,333.2 457.3,333.8 452.0,335.0C446.7,336.2 430.3,336.3 418.0,337.0C405.7,337.7 391.3,338.3 378.0,339.0C364.7,339.7 351.3,340.4 338.0,341.0C324.7,341.6 309.3,342.0 298.0,342.4C286.7,342.8 278.3,343.2 270.0,343.5C261.7,343.8 252.7,346.2 248.0,344.0C243.3,341.8 244.0,335.7 242.0,330.0C240.0,324.3 237.8,316.2 236.0,310.0C234.2,303.8 232.2,296.8 231.0,293.0C229.8,289.2 223.8,288.3 229.0,287.0Z" fill="#507d90" opacity="1" />
<path d="M229.0,287.0C234.2,285.7 250.5,285.7 262.0,285.0C273.5,284.3 285.3,283.8 298.0,283.0C310.7,282.2 326.3,280.5 338.0,280.0C349.7,279.5 358.7,279.5 368.0,280.0C377.3,280.5 387.7,281.5 394.0,283.0C400.3,284.5 401.3,286.2 406.0,289.0C410.7,291.8 416.7,295.5 422.0,300.0C427.3,304.5 433.3,311.0 438.0,316.0C442.7,321.0 447.7,326.8 450.0,330.0C452.3,333.2 457.3,333.8 452.0,335.0C446.7,336.2 430.3,336.3 418.0,337.0C405.7,337.7 391.3,338.3 378.0,339.0C364.7,339.7 351.3,340.4 338.0,341.0C324.7,341.6 309.3,342.0 298.0,342.4C286.7,342.8 278.3,343.2 270.0,343.5C261.7,343.8 252.7,346.2 248.0,344.0C243.3,341.8 244.0,335.7 242.0,330.0C240.0,324.3 237.8,316.2 236.0,310.0C234.2,303.8 232.2,296.8 231.0,293.0C229.8,289.2 223.8,288.3 229.0,287.0Z" fill="url(#tw2)"/>
<path d="M303.0,283.0L341.0,282.5L340.0,289.0L336.0,293.0L310.0,293.5L306.0,288.0Z" fill="#3d5a68" opacity="1" />
<path d="M306.0,288.0L310.0,293.5L336.0,293.0L340.0,289.0" fill="none" stroke="#36372f" stroke-width="1" opacity="0.7" stroke-linecap="round" stroke-linejoin="round"/>
<path d="M233.0,351.0C237.8,350.6 251.2,349.4 262.0,348.5C272.8,347.6 285.3,346.3 298.0,345.5C310.7,344.7 324.7,344.2 338.0,343.5C351.3,342.8 364.3,342.2 378.0,341.5C391.7,340.8 406.7,340.2 420.0,339.5C433.3,338.8 451.7,337.4 458.0,337.0" fill="none" stroke="#36372f" stroke-width="1.44" stroke-dasharray="3 1.3" opacity="0.9" stroke-linecap="round"/>
<path d="M166.0,328.0C166.3,326.4 169.0,325.2 172.0,324.5C175.0,323.8 180.3,323.8 184.0,324.0C187.7,324.2 191.7,324.5 194.0,325.5C196.3,326.5 197.3,328.1 198.0,330.0C198.7,331.9 198.7,335.6 198.0,337.0C197.3,338.4 196.7,338.5 194.0,338.5C191.3,338.5 186.0,337.8 182.0,337.0C178.0,336.2 172.7,335.5 170.0,334.0C167.3,332.5 165.7,329.6 166.0,328.0Z" fill="#527888" opacity="1" />
<path d="M166.0,329.0C166.7,330.0 167.3,333.4 170.0,335.0C172.7,336.6 177.7,337.7 182.0,338.5C186.3,339.3 193.2,340.2 196.0,340.0C198.8,339.8 198.5,337.5 199.0,337.0" fill="none" stroke="#36372f" stroke-width="1.6" opacity="0.9" stroke-linecap="round" stroke-linejoin="round"/>
<path d="M172.0,329.0C174.0,329.3 180.5,330.7 184.0,331.0C187.5,331.3 191.5,331.0 193.0,331.0" fill="none" stroke="#36372f" stroke-width="0.8" opacity="0.6" stroke-linecap="round" stroke-linejoin="round"/>
<path d="M203.0,345.0C203.7,346.2 205.2,350.2 207.0,352.0C208.8,353.8 212.8,355.3 214.0,356.0" fill="none" stroke="#36372f" stroke-width="1.5" opacity="0.8" stroke-linecap="round" stroke-linejoin="round"/>
<path d="M189.0,353.0C189.7,352.0 196.0,350.2 200.0,351.0C204.0,351.8 210.2,355.5 213.0,358.0C215.8,360.5 218.2,365.3 217.0,366.0C215.8,366.7 209.5,363.5 206.0,362.0C202.5,360.5 198.8,358.5 196.0,357.0C193.2,355.5 188.3,354.0 189.0,353.0Z" fill="#4a4a3e" opacity="0.8" />
<path d="M149.0,340.0C149.3,340.7 149.8,343.0 151.0,344.0C152.2,345.0 155.2,345.7 156.0,346.0" fill="none" stroke="#5f8c9c" stroke-width="1.6" opacity="0.9" stroke-linecap="round" stroke-linejoin="round"/>
<path d="M447.0,319.0C447.0,317.2 450.2,315.8 452.0,315.0C453.8,314.2 456.0,314.1 458.0,314.5C460.0,314.9 462.6,316.1 464.0,317.5C465.4,318.9 466.3,321.1 466.5,323.0C466.7,324.9 465.9,327.5 465.0,329.0C464.1,330.5 462.2,331.2 461.0,332.0C459.8,332.8 459.5,335.0 458.0,334.0C456.5,333.0 453.8,328.5 452.0,326.0C450.2,323.5 447.0,320.8 447.0,319.0Z" fill="#42606e" opacity="1" />
<path d="M447.0,319.0C447.8,318.3 450.2,315.8 452.0,315.0C453.8,314.2 456.0,314.1 458.0,314.5C460.0,314.9 462.6,316.1 464.0,317.5C465.4,318.9 466.3,321.1 466.5,323.0C466.7,324.9 465.9,327.5 465.0,329.0C464.1,330.5 461.7,331.5 461.0,332.0" fill="none" stroke="#36372f" stroke-width="1.2" opacity="0.9" stroke-linecap="round" stroke-linejoin="round"/>
<g transform="rotate(-4 118.5 386)">
<ellipse cx="118.5" cy="386" rx="8.5" ry="39" fill="none" stroke="#527a8a" stroke-width="1.5"/>
<ellipse cx="118.5" cy="386" rx="6" ry="33" fill="none" stroke="#36372f" stroke-width="0.9" stroke-dasharray="3 1.5" opacity="0.8"/>
<line x1="118.5" y1="388" x2="118.5" y2="356" stroke="#36372f" stroke-width="0.9" opacity="0.75"/>
<line x1="118.5" y1="388" x2="123.5" y2="370" stroke="#36372f" stroke-width="0.9" opacity="0.75"/>
<line x1="118.5" y1="388" x2="124.0" y2="398" stroke="#36372f" stroke-width="0.9" opacity="0.75"/>
<line x1="118.5" y1="388" x2="120.5" y2="418" stroke="#36372f" stroke-width="0.9" opacity="0.75"/>
<line x1="118.5" y1="388" x2="114.5" y2="410" stroke="#36372f" stroke-width="0.9" opacity="0.75"/>
<line x1="118.5" y1="388" x2="113.0" y2="382" stroke="#36372f" stroke-width="0.9" opacity="0.75"/>
<line x1="118.5" y1="388" x2="115.5" y2="362" stroke="#36372f" stroke-width="0.9" opacity="0.75"/>
</g>
<path d="M112.0,346.0C113.7,345.7 118.8,342.3 122.0,344.0C125.2,345.7 128.7,350.7 131.0,356.0C133.3,361.3 134.8,368.7 136.0,376.0C137.2,383.3 138.0,392.7 138.0,400.0C138.0,407.3 137.2,414.7 136.0,420.0C134.8,425.3 131.8,430.0 131.0,432.0" fill="none" stroke="#36372f" stroke-width="1.2" stroke-dasharray="3 1.3" opacity="0.8500000000000001" stroke-linecap="round"/>
<path d="M116.0,341.0C117.8,340.8 123.5,338.2 127.0,340.0C130.5,341.8 134.5,346.3 137.0,352.0C139.5,357.7 140.8,366.0 142.0,374.0C143.2,382.0 143.8,391.7 144.0,400.0C144.2,408.3 143.2,420.0 143.0,424.0" fill="none" stroke="#36372f" stroke-width="1.2" stroke-dasharray="3 1.3" opacity="0.75" stroke-linecap="round"/>
<path d="M231.0,486.0C230.7,483.3 229.2,475.7 229.0,470.0C228.8,464.3 229.2,457.5 230.0,452.0C230.8,446.5 232.2,441.2 234.0,437.0C235.8,432.8 238.3,429.4 241.0,427.0C243.7,424.6 246.8,423.2 250.0,422.5C253.2,421.8 257.0,422.2 260.0,423.0C263.0,423.8 266.7,426.3 268.0,427.0" fill="none" stroke="#3b3b33" stroke-width="5.0" opacity="0.95" stroke-linecap="round" stroke-linejoin="round"/>
<path d="M268.0,427.0C269.5,428.5 274.3,432.2 277.0,436.0C279.7,439.8 282.2,444.3 284.0,450.0C285.8,455.7 287.0,463.0 288.0,470.0C289.0,477.0 289.7,484.5 290.0,492.0C290.3,499.5 290.3,507.0 290.0,515.0C289.7,523.0 289.2,532.5 288.0,540.0C286.8,547.5 283.8,556.7 283.0,560.0" fill="none" stroke="#36372f" stroke-width="1.32" stroke-dasharray="3 1.3" opacity="0.9" stroke-linecap="round"/>
<path d="M272.0,423.0C273.7,424.7 279.0,428.5 282.0,433.0C285.0,437.5 288.0,443.5 290.0,450.0C292.0,456.5 293.0,464.5 294.0,472.0C295.0,479.5 295.8,487.0 296.0,495.0C296.2,503.0 295.5,511.7 295.0,520.0C294.5,528.3 294.0,537.8 293.0,545.0C292.0,552.2 289.7,560.0 289.0,563.0" fill="none" stroke="#36372f" stroke-width="1.2" stroke-dasharray="3 1.3" opacity="0.75" stroke-linecap="round"/>
<path d="M242.0,553.0C243.5,554.4 247.0,559.2 251.0,561.5C255.0,563.8 260.8,565.5 266.0,566.5C271.2,567.5 276.3,567.6 282.0,567.5C287.7,567.4 297.0,566.2 300.0,566.0" fill="none" stroke="#3a3a33" stroke-width="6.0" opacity="0.95" stroke-linecap="round" stroke-linejoin="round"/>
<g transform="rotate(-7 258.5 498.5)">
<ellipse cx="258.5" cy="498.5" rx="24.5" ry="62" fill="none" stroke="#4f7485" stroke-width="4.2"/>
<ellipse cx="258.5" cy="498.5" rx="24.5" ry="62" fill="none" stroke="#36372f" stroke-width="0.7" stroke-dasharray="3 1.5" opacity="0.6"/>
</g>
<path d="M237.2,478.0C236.8,472.9 239.0,462.8 241.0,457.0C243.0,451.2 247.3,445.1 249.4,443.4C251.5,441.6 253.8,443.2 253.6,446.5C253.4,449.8 250.0,456.5 248.4,463.3C246.7,470.1 245.4,485.0 243.5,487.5C241.7,489.9 237.6,483.1 237.2,478.0Z" fill="#3a3a33" opacity="0.95" />
<path d="M251.9,444.4C252.6,439.2 255.7,443.2 257.4,444.4C259.1,445.6 261.4,445.1 262.0,451.8C262.6,458.4 262.1,478.6 261.2,484.3C260.3,490.1 258.0,487.8 256.8,486.4C255.5,485.0 254.4,482.9 253.6,475.9C252.8,468.9 251.3,449.7 251.9,444.4Z" fill="#3a3a33" opacity="0.95" />
<path d="M266.6,471.7C267.8,469.3 271.1,474.0 272.1,478.0C273.2,482.1 273.5,492.7 272.9,495.9C272.4,499.0 270.1,497.5 268.7,496.9C267.4,496.3 265.3,496.5 265.0,492.3C264.6,488.1 265.4,474.1 266.6,471.7Z" fill="#3a3a33" opacity="0.95" />
<path d="M267.9,507.4C269.1,506.4 273.4,509.6 274.2,513.3C275.0,517.0 273.7,527.7 272.9,529.5C272.2,531.3 270.6,525.9 269.6,524.2C268.6,522.6 267.3,522.4 267.1,519.6C266.8,516.8 266.7,508.5 267.9,507.4Z" fill="#3a3a33" opacity="0.95" />
<path d="M262.0,513.7C262.9,513.0 265.4,520.7 266.6,524.2C267.9,527.7 269.6,530.4 269.6,534.7C269.6,539.1 267.8,549.1 266.6,550.5C265.5,551.9 263.8,546.8 262.9,543.2C261.9,539.5 261.3,533.3 261.2,528.4C261.0,523.5 261.1,514.4 262.0,513.7Z" fill="#3a3a33" opacity="0.95" />
<path d="M254.0,512.1C255.4,510.0 259.1,512.4 259.9,515.8C260.8,519.3 259.4,527.6 259.1,532.6C258.7,537.7 258.8,544.5 257.8,546.3C256.8,548.1 254.2,546.5 253.2,543.6C252.2,540.6 251.8,533.7 251.9,528.4C252.1,523.2 252.7,514.2 254.0,512.1Z" fill="#3a3a33" opacity="0.95" />
<path d="M241.0,513.7C242.8,511.2 250.1,508.2 251.5,510.0C252.9,511.7 250.3,520.3 249.4,524.2C248.5,528.2 247.7,533.5 246.3,533.7C244.8,533.9 241.5,528.6 240.6,525.3C239.7,522.0 239.2,516.3 241.0,513.7Z" fill="#3a3a33" opacity="0.95" />
<path d="M236.8,487.5C237.9,486.8 243.7,492.9 244.8,494.8C245.9,496.8 244.6,498.4 243.5,499.0C242.4,499.7 239.2,500.5 238.1,498.6C236.9,496.7 235.7,488.1 236.8,487.5Z" fill="#3a3a33" opacity="0.95" />
<path d="M249.4,498.0C250.3,497.5 252.7,495.0 254.7,494.8C256.6,494.7 259.9,496.6 261.0,496.9" fill="none" stroke="#3a3a33" stroke-width="1.2" opacity="0.9" stroke-linecap="round" stroke-linejoin="round"/>
<path d="M248.4,502.2C249.4,501.7 252.4,499.2 254.7,499.0C256.9,498.9 260.8,500.8 262.0,501.1" fill="none" stroke="#3a3a33" stroke-width="1.2" opacity="0.9" stroke-linecap="round" stroke-linejoin="round"/>
</g><g clip-path="url(#bodyclip)">
<path d="M299.7,464.9C302.7,465.6 315.1,471.4 322.3,473.8C329.6,476.2 336.6,477.8 343.3,479.4C350.1,481.1 356.5,482.8 362.7,483.5C368.9,484.2 375.1,484.6 380.5,483.5C385.9,482.4 390.7,479.6 395.1,477.0C399.4,474.5 402.3,469.3 406.4,468.1C410.4,466.9 414.4,469.3 419.3,469.7C424.1,470.2 435.5,469.9 435.5,470.9C435.5,471.8 425.8,473.0 419.3,475.4C412.8,477.8 404.2,482.8 396.7,485.1C389.1,487.4 381.0,488.7 374.0,489.1C367.0,489.5 360.6,488.5 354.6,487.5C348.7,486.6 344.4,485.2 338.5,483.5C332.6,481.8 324.7,479.6 319.1,477.3C313.4,475.1 307.8,471.8 304.5,469.7C301.3,467.7 296.7,464.2 299.7,464.9Z" fill="#4a6b7b" opacity="1" />
<path d="M304.5,470.6C307.0,471.8 313.4,476.0 319.1,478.3C324.7,480.6 332.6,482.8 338.5,484.5C344.4,486.1 348.7,487.4 354.6,488.3C360.6,489.2 367.0,490.4 374.0,489.9C381.0,489.5 389.1,488.1 396.7,485.7C404.2,483.4 415.5,477.4 419.3,475.7" fill="none" stroke="#36372f" stroke-width="1.2" opacity="0.85" stroke-linecap="round" stroke-linejoin="round"/>
<path d="M291.6,455.2C294.3,453.0 303.2,447.4 311.0,446.3C318.8,445.2 329.9,447.5 338.5,448.7C347.1,449.9 354.6,451.8 362.7,453.6C370.8,455.3 379.7,457.2 387.0,459.2C394.2,461.3 405.0,463.3 406.4,466.0C407.7,468.7 399.4,472.8 395.1,475.4C390.7,478.0 385.9,480.8 380.5,481.9C375.1,482.9 368.9,482.5 362.7,481.9C356.5,481.2 350.1,479.4 343.3,477.8C336.6,476.2 328.5,474.2 322.3,472.2C316.1,470.2 310.7,467.9 306.2,465.7C301.6,463.6 297.3,461.0 294.8,459.2C292.4,457.5 288.9,457.4 291.6,455.2Z" fill="#7e8ea8" opacity="1" />
<path d="M291.6,455.2C294.3,453.0 303.2,447.4 311.0,446.3C318.8,445.2 329.9,447.5 338.5,448.7C347.1,449.9 354.6,451.8 362.7,453.6C370.8,455.3 379.7,457.2 387.0,459.2C394.2,461.3 405.0,463.3 406.4,466.0C407.7,468.7 399.4,472.8 395.1,475.4C390.7,478.0 385.9,480.8 380.5,481.9C375.1,482.9 368.9,482.5 362.7,481.9C356.5,481.2 350.1,479.4 343.3,477.8C336.6,476.2 328.5,474.2 322.3,472.2C316.1,470.2 310.7,467.9 306.2,465.7C301.6,463.6 297.3,461.0 294.8,459.2C292.4,457.5 288.9,457.4 291.6,455.2Z" fill="url(#tw2)"/>
<path d="M293.2,455.2C295.5,453.3 306.7,448.1 310.2,447.9C313.7,447.8 315.2,452.5 314.2,454.4C313.3,456.3 307.5,458.4 304.5,459.2C301.6,460.1 298.4,459.9 296.5,459.2C294.6,458.6 290.9,457.1 293.2,455.2Z" fill="#73879f" opacity="1" />
<path d="M310.2,447.1C310.1,444.8 314.2,445.6 315.9,447.9C317.5,450.2 319.8,458.6 319.9,460.9C320.0,463.1 318.3,464.0 316.7,461.7C315.1,459.4 310.3,449.4 310.2,447.1Z" fill="#3b3a36" opacity="1" />
<path d="M319.9,467.3L319.1,450.4" fill="none" stroke="#cfd0e3" stroke-width="4.6" opacity="1" stroke-linecap="round" stroke-linejoin="round"/>
<path d="M319.9,450.4L328.0,459.2L328.8,449.5" fill="none" stroke="#cfd0e3" stroke-width="2.6" opacity="1" stroke-linecap="round" stroke-linejoin="round"/>
<path d="M332.3,449.5C332.3,451.2 331.7,456.6 332.3,459.2C333.0,461.9 334.2,464.0 336.1,465.4C337.9,466.8 340.9,467.8 343.3,467.8C345.8,467.8 348.8,466.8 350.6,465.4C352.4,464.0 353.7,461.9 354.3,459.2C354.9,456.6 354.3,451.2 354.3,449.5" fill="none" stroke="#cfd0e3" stroke-width="3.3" opacity="1" stroke-linecap="round" stroke-linejoin="round"/>
<path d="M338.2,451.2C338.2,452.2 337.7,456.0 338.2,457.6C338.6,459.2 339.9,460.2 340.9,460.9C341.9,461.5 343.1,461.8 344.1,461.7C345.2,461.5 346.6,460.9 347.4,460.1C348.2,459.2 348.7,458.3 349.0,456.8C349.3,455.3 350.7,452.1 349.0,451.2C347.2,450.2 340.2,451.2 338.5,451.2" fill="none" stroke="#d9d9ea" stroke-width="1.8" opacity="1" stroke-linecap="round" stroke-linejoin="round"/>
<path d="M340.1,457.6L346.6,459.2L344.1,461.7Z" fill="#3b3a36" opacity="0.9" />
<path d="M354.6,465.7C356.0,463.0 361.6,458.8 366.0,457.6C370.3,456.4 375.7,457.8 380.5,458.4C385.4,459.1 390.7,460.3 395.1,461.7C399.4,463.0 406.1,464.2 406.4,466.5C406.6,468.8 400.7,472.8 396.7,475.4C392.6,478.0 387.0,481.1 382.1,481.9C377.3,482.7 371.6,481.6 367.6,480.3C363.5,478.9 360.0,476.2 357.9,473.8C355.7,471.4 353.3,468.4 354.6,465.7Z" fill="#e4ebe6" opacity="1" />
<path d="M370.8,466.5L380.5,460.9" fill="none" stroke="#36372f" stroke-width="1.0" opacity="0.9" stroke-linecap="round" stroke-linejoin="round"/>
<path d="M380.5,472.5L391.8,464.4" fill="none" stroke="#36372f" stroke-width="1.0" opacity="0.9" stroke-linecap="round" stroke-linejoin="round"/>
<path d="M338.5,472.2C340.1,470.5 351.1,466.9 354.6,467.3C358.1,467.7 357.3,472.4 359.5,474.6C361.6,476.8 367.8,479.3 367.6,480.3C367.3,481.2 361.6,480.7 357.9,480.3C354.1,479.8 348.2,478.7 344.9,477.3C341.7,476.0 336.9,473.8 338.5,472.2Z" fill="#a9b1cf" opacity="0.9" />
<path d="M304.9,459.2L314.2,466.7" fill="none" stroke="#b3302c" stroke-width="4.6" opacity="1" stroke-linecap="round" stroke-linejoin="round"/>
<path d="M324.9,469.9L337.2,473.5" fill="none" stroke="#b3302c" stroke-width="5.2" opacity="1" stroke-linecap="round" stroke-linejoin="round"/>
<path d="M315.1,464.9L324.7,471.4" fill="none" stroke="#dfe0ee" stroke-width="2.2" opacity="1" stroke-linecap="round" stroke-linejoin="round"/>
<path d="M291.6,455.2C294.8,453.7 303.2,447.1 311.0,446.0C318.8,444.9 329.9,447.2 338.5,448.4C347.1,449.6 354.6,451.5 362.7,453.3C370.8,455.0 379.7,456.8 387.0,458.9C394.2,461.0 400.4,464.3 406.4,466.0C412.3,467.8 417.7,468.5 422.5,469.3C427.4,470.1 433.3,470.6 435.5,470.9" fill="none" stroke="#36372f" stroke-width="1.2" opacity="0.9" stroke-linecap="round" stroke-linejoin="round"/>
<path d="M308.6,475.4C310.1,474.3 317.7,476.2 319.9,480.3C322.1,484.3 322.1,496.8 321.5,499.6C321.0,502.5 318.4,499.4 316.7,497.2C314.9,495.1 312.4,490.4 311.0,486.7C309.7,483.1 307.1,476.5 308.6,475.4Z" fill="#3b3b33" opacity="0.9" />
<path d="M316.7,506.1L319.9,503.7L375.7,515.8L376.5,526.3L316.7,512.9Z" fill="#e2973a" opacity="1" />
<clipPath id="sigc"><path d="M316.7,506.1L319.9,503.7L375.7,515.8L376.5,526.3L316.7,512.9Z"/></clipPath>
<g clip-path="url(#sigc)" stroke="#b56e1c" stroke-width="0.9" opacity="0.8">
<line x1="314.0" y1="530" x2="326.0" y2="500"/>
<line x1="318.2" y1="530" x2="330.2" y2="500"/>
<line x1="322.4" y1="530" x2="334.4" y2="500"/>
<line x1="326.6" y1="530" x2="338.6" y2="500"/>
<line x1="330.8" y1="530" x2="342.8" y2="500"/>
<line x1="335.0" y1="530" x2="347.0" y2="500"/>
<line x1="339.2" y1="530" x2="351.2" y2="500"/>
<line x1="343.4" y1="530" x2="355.4" y2="500"/>
<line x1="347.6" y1="530" x2="359.6" y2="500"/>
<line x1="351.8" y1="530" x2="363.8" y2="500"/>
<line x1="356.0" y1="530" x2="368.0" y2="500"/>
<line x1="360.2" y1="530" x2="372.2" y2="500"/>
<line x1="364.4" y1="530" x2="376.4" y2="500"/>
<line x1="368.6" y1="530" x2="380.6" y2="500"/>
<line x1="372.8" y1="530" x2="384.8" y2="500"/>
<line x1="377.0" y1="530" x2="389.0" y2="500"/>
</g>
<path d="M316.7,514.2L376.5,527.4" fill="none" stroke="#a42a28" stroke-width="2.6" opacity="1" stroke-linecap="round" stroke-linejoin="round"/>
<path d="M377.3,517.4C380.5,516.1 392.4,517.7 396.7,519.0C401.0,520.4 402.6,523.4 403.1,525.5C403.7,527.7 403.7,531.0 399.9,532.0C396.1,532.9 384.3,532.0 380.5,531.2C376.7,530.4 377.8,529.4 377.3,527.1C376.7,524.8 374.0,518.8 377.3,517.4Z" fill="#e2e9e5" opacity="1" />
<path d="M317.5,519.0L324.7,522.3L326.8,540.1L322.3,532.0Z" fill="#433e36" opacity="1" />
<path d="M331.2,525.5L338.5,524.7L337.2,557.8L333.0,557.8Z" fill="#433e36" opacity="1" />
<path d="M349.0,541.7L354.6,540.9L364.3,548.1L356.3,555.4L351.4,548.9Z" fill="#433e36" opacity="1" />
<path d="M363.5,547.3L384.5,546.5" fill="none" stroke="#433e36" stroke-width="1.6" opacity="1" stroke-linecap="round" stroke-linejoin="round"/>
<path d="M354.6,557.8L387.0,551.7" fill="none" stroke="#433e36" stroke-width="1.6" opacity="1" stroke-linecap="round" stroke-linejoin="round"/>
<path d="M406.4,544.9L450.0,541.7" fill="none" stroke="#433e36" stroke-width="1.6" opacity="1" stroke-linecap="round" stroke-linejoin="round"/>
<path d="M420.5,495.8L444.9,478.3L461.1,473.7L502.9,465.6L549.4,459.7L595.9,455.1L605.2,453.9L599.4,467.9L595.9,486.5L591.2,477.2L555.2,479.5L554.1,483.0L526.2,486.5L491.3,492.3L463.4,493.4L456.5,500.4L437.9,497.4Z" fill="#433e36" opacity="1" />
<path d="M606.3,455.1L619.1,463.2L607.5,470.2Z" fill="#433e36" opacity="1" />
<path d="M454.1,474.9C456.1,473.3 456.9,472.9 457.9,474.9C458.9,476.8 459.2,481.0 460.2,486.5C461.2,491.9 464.1,503.8 463.9,507.4C463.7,510.9 461.2,509.8 458.8,507.8C456.4,505.9 451.6,499.7 449.5,495.8C447.4,491.8 445.2,487.6 446.0,484.1C446.8,480.7 452.2,476.4 454.1,474.9Z" fill="#4f788c" opacity="1" />
<path d="M603.3,454.4C604.1,454.9 600.8,460.5 599.6,466.0C598.4,471.6 597.7,486.5 596.3,487.6C594.9,488.7 591.5,476.6 591.2,472.5C591.0,468.5 592.9,466.3 594.9,463.2C597.0,460.2 602.5,453.9 603.3,454.4Z" fill="#4f788c" opacity="1" />
<path d="M414.6,496.9C419.3,493.2 427.8,480.7 442.5,474.9C457.2,469.0 475.8,466.1 502.9,462.1C530.0,458.0 585.6,450.5 605.2,450.5C624.7,450.5 619.5,458.0 620.3,462.1C621.0,466.1 613.5,469.8 609.8,474.9C606.1,479.9 600.1,489.4 598.2,492.3" fill="none" stroke="#36372f" stroke-width="1.2" stroke-dasharray="3.2 1.8" opacity="0.75" stroke-linecap="round"/>
<path d="M417.0,500.4C423.6,501.4 442.1,506.4 456.5,506.2C470.8,506.0 486.7,502.0 502.9,499.2C519.2,496.5 538.6,491.5 554.1,490.0C569.5,488.4 585.0,491.7 595.9,490.0C606.7,488.2 615.2,481.2 619.1,479.5" fill="none" stroke="#36372f" stroke-width="1.2" stroke-dasharray="3.2 1.8" opacity="0.8" stroke-linecap="round"/>
<path d="M417.0,507.4C423.6,508.2 442.1,512.4 456.5,512.0C470.8,511.6 486.7,507.8 502.9,505.1C519.2,502.3 538.6,497.5 554.1,495.8C569.5,494.0 584.8,496.1 595.9,494.6C606.9,493.1 616.2,487.8 620.3,486.5" fill="none" stroke="#36372f" stroke-width="1.2" stroke-dasharray="3.2 1.8" opacity="0.75" stroke-linecap="round"/>
<path d="M414.6,516.7C421.6,517.3 444.1,520.2 456.5,520.2C468.9,520.2 483.6,517.3 489.0,516.7" fill="none" stroke="#36372f" stroke-width="1.2" stroke-dasharray="3.2 1.8" opacity="0.75" stroke-linecap="round"/>
<path d="M586.6,503.9C590.1,502.9 601.7,499.8 607.5,498.1C613.3,496.3 619.1,494.2 621.4,493.4" fill="none" stroke="#36372f" stroke-width="1.2" stroke-dasharray="3.2 1.8" opacity="0.75" stroke-linecap="round"/>
<path d="M492.5,520.2L585.4,505.1L583.1,526.0L489.0,542.2Z" fill="#dfe7e1" opacity="1" />
<path d="M406.3,544.9C411.5,544.6 427.7,543.8 437.8,543.1C447.8,542.5 461.8,541.4 466.7,541.0" fill="none" stroke="#433e36" stroke-width="1.3" opacity="1" stroke-linecap="round" stroke-linejoin="round"/>
<path d="M470.6,548.4C474.8,547.8 486.1,546.2 495.5,544.9C505.0,543.7 515.7,542.8 527.1,541.0C538.4,539.3 557.0,536.1 563.8,534.4C570.6,532.8 567.1,531.6 567.8,531.0" fill="none" stroke="#433e36" stroke-width="3.0" opacity="1" stroke-linecap="round" stroke-linejoin="round"/>
<path d="M474.5,555.7C479.8,555.2 495.5,553.7 506.1,552.6C516.6,551.4 527.9,550.6 537.6,548.9C547.2,547.2 555.1,545.2 563.8,542.3C572.6,539.5 583.1,535.0 590.1,531.8C597.1,528.6 603.2,524.6 605.8,523.2" fill="none" stroke="#433e36" stroke-width="2.4" opacity="1" stroke-linecap="round" stroke-linejoin="round"/>
<path d="M296.0,558.0L310.0,565.0L330.0,570.5L360.0,569.0L380.0,568.6L406.3,569.9L432.5,573.8L440.4,576.7L458.8,572.5L474.5,571.2L498.2,568.6L537.6,563.3L563.8,556.8L584.8,547.3L599.0,535.0L611.6,527.1L626.1,523.9L631.1,522.9L634.0,540.0L620.0,556.0L596.0,560.0L520.0,580.0L456.0,588.0L442.0,594.0L398.0,590.0L340.0,584.0L300.0,574.0L285.0,566.0Z" fill="#4a6b7b" opacity="1" />
<path d="M296.0,558.0L310.0,565.0L330.0,570.5L360.0,569.0L380.0,568.6L406.3,569.9L432.5,573.8L440.4,576.7L458.8,572.5L474.5,571.2L498.2,568.6L537.6,563.3L563.8,556.8L584.8,547.3L599.0,535.0L611.6,527.1L626.1,523.9L631.1,522.9L634.0,540.0L620.0,556.0L596.0,560.0L520.0,580.0L456.0,588.0L442.0,594.0L398.0,590.0L340.0,584.0L300.0,574.0L285.0,566.0Z" fill="url(#tw)" opacity="0.6"/>
<path d="M369.5,558.9L380.0,559.4L406.3,562.0L432.5,567.3L440.4,569.9L458.8,566.0L474.5,562.0L498.2,559.4L537.6,554.1L563.8,546.3L584.8,537.9L595.9,528.9L607.9,516.1L621.1,510.5L628.4,512.1L631.1,522.9L626.1,523.9L611.6,527.1L599.0,535.0L584.8,547.3L563.8,556.8L537.6,563.3L498.2,568.6L474.5,571.2L458.8,572.5L440.4,576.7L432.5,573.8L406.3,569.9L380.0,568.6L369.5,567.8Z" fill="#433e36" opacity="1" />
<path d="M296.0,557.0C298.3,557.8 305.0,560.5 310.0,562.0C315.0,563.5 320.2,565.4 326.0,566.0C331.8,566.6 337.7,565.9 345.0,565.5C352.3,565.1 365.8,563.8 370.0,563.5" fill="none" stroke="#433e36" stroke-width="2.4" opacity="0.95" stroke-linecap="round" stroke-linejoin="round"/>
<path d="M340.0,566.0C342.5,565.6 350.0,563.9 355.0,563.5C360.0,563.1 367.5,563.5 370.0,563.5" fill="none" stroke="#433e36" stroke-width="4.5" opacity="1" stroke-linecap="round" stroke-linejoin="round"/>
<path d="M400.0,582.5C406.7,583.3 431.0,587.9 440.0,587.5C449.0,587.1 447.3,581.8 454.0,580.0C460.7,578.2 469.0,578.0 480.0,576.5C491.0,575.0 506.7,573.4 520.0,571.0C533.3,568.6 547.0,565.5 560.0,562.0C573.0,558.5 588.7,552.7 598.0,550.0C607.3,547.3 613.0,546.7 616.0,546.0" fill="none" stroke="#36372f" stroke-width="1.2" stroke-dasharray="3.2 1.8" opacity="0.8500000000000001" stroke-linecap="round"/>
<path d="M612.0,530.0C613.0,532.7 617.0,543.3 618.0,546.0" fill="none" stroke="#36372f" stroke-width="1.2" stroke-dasharray="3.2 1.8" opacity="0.8500000000000001" stroke-linecap="round"/>
<path d="M615.0,415.0C615.7,414.3 619.2,415.8 621.0,418.0C622.8,420.2 624.5,424.0 625.5,428.0C626.5,432.0 627.0,437.8 627.0,442.0C627.0,446.2 626.4,452.2 625.5,453.0C624.6,453.8 622.5,450.3 621.5,447.0C620.5,443.7 620.2,437.2 619.5,433.0C618.8,428.8 617.8,425.0 617.0,422.0C616.2,419.0 614.3,415.7 615.0,415.0Z" fill="#d3d5e8" opacity="1" />
<path d="M612.0,408.0C613.0,409.3 616.3,412.7 618.0,416.0C619.7,419.3 621.0,423.7 622.0,428.0C623.0,432.3 623.8,437.3 624.0,442.0C624.2,446.7 623.6,453.7 623.5,456.0" fill="none" stroke="#36372f" stroke-width="1.0" opacity="0.6" stroke-linecap="round" stroke-linejoin="round"/>
<path d="M618.0,420.0C618.5,422.0 620.2,427.7 621.0,432.0C621.8,436.3 622.2,443.7 622.5,446.0" fill="none" stroke="#9aa0c0" stroke-width="0.8" opacity="0.8" stroke-linecap="round" stroke-linejoin="round"/>
<path d="M619.0,446.0C619.7,445.7 622.8,450.0 624.0,452.0C625.2,454.0 626.2,455.0 626.5,458.0C626.8,461.0 626.4,469.3 626.0,470.0C625.6,470.7 625.0,464.7 624.0,462.0C623.0,459.3 620.8,456.7 620.0,454.0C619.2,451.3 618.3,446.3 619.0,446.0Z" fill="#4f788c" opacity="0.95" />
<path d="M606.3,455.1L620.3,463.2L607.5,470.7Z" fill="#433e36" opacity="1" />
<path d="M607.0,472.0C608.2,471.3 611.7,468.3 614.0,468.0C616.3,467.7 619.3,468.3 621.0,470.0C622.7,471.7 623.5,476.7 624.0,478.0" fill="none" stroke="#36372f" stroke-width="1.2" stroke-dasharray="3.2 1.8" opacity="0.75" stroke-linecap="round"/>
<path d="M600.0,488.0C601.7,487.7 606.7,485.7 610.0,486.0C613.3,486.3 618.3,489.3 620.0,490.0" fill="none" stroke="#36372f" stroke-width="1.2" stroke-dasharray="3.2 1.8" opacity="0.75" stroke-linecap="round"/>
</g><g clip-path="url(#bodyclip)">
<path d="M124.3,302.1C127.1,303.3 136.0,307.0 141.3,309.4C146.5,311.8 151.8,314.1 155.8,316.7C159.9,319.3 163.9,323.8 165.5,325.2" fill="none" stroke="#39352b" stroke-width="1.8" stroke-dasharray="3.4 1.0" opacity="0.9" stroke-linecap="butt"/>
<path d="M114.6,321.6C118.2,324.4 129.1,333.3 136.4,338.5C143.7,343.8 151.0,349.5 158.3,353.1C165.5,356.7 172.4,357.6 180.1,360.4C187.8,363.2 195.9,365.6 204.4,370.1C212.9,374.5 224.2,382.6 231.1,387.1C237.9,391.5 240.8,392.8 245.6,396.8C250.5,400.8 257.8,408.9 260.2,411.4" fill="none" stroke="#39352b" stroke-width="1.8" stroke-dasharray="3.4 1.0" opacity="0.9" stroke-linecap="butt"/>
<path d="M146.1,389.5C150.6,390.7 164.3,394.8 172.8,396.8C181.3,398.8 189.8,400.0 197.1,401.7C204.4,403.3 210.0,404.5 216.5,406.5C223.0,408.5 231.1,411.2 235.9,413.8C240.8,416.4 244.0,420.9 245.6,422.3" fill="none" stroke="#39352b" stroke-width="1.8" stroke-dasharray="3.4 1.0" opacity="0.9" stroke-linecap="butt"/>
<path d="M141.3,355.5C141.1,358.8 139.6,367.7 140.0,375.0C140.5,382.2 142.3,391.5 143.7,399.2C145.1,406.9 147.7,417.4 148.5,421.1" fill="none" stroke="#39352b" stroke-width="1.8" stroke-dasharray="3.4 1.0" opacity="0.9" stroke-linecap="butt"/>
<path d="M144.9,421.1C149.6,423.9 164.1,432.0 172.8,438.1C181.5,444.1 190.2,452.2 197.1,457.5C204.0,462.7 209.2,466.7 214.1,469.6C218.9,472.5 224.2,474.1 226.2,475.0" fill="none" stroke="#39352b" stroke-width="1.8" stroke-dasharray="3.4 1.0" opacity="0.9" stroke-linecap="butt"/>
<path d="M231.1,353.1C235.1,355.9 247.2,364.8 255.3,370.1C263.4,375.4 272.3,379.8 279.6,384.7C286.9,389.5 293.8,394.0 299.0,399.2C304.3,404.5 307.9,410.1 311.2,416.2C314.4,422.3 317.2,432.4 318.4,435.6" fill="none" stroke="#39352b" stroke-width="1.8" stroke-dasharray="3.4 1.0" opacity="0.9" stroke-linecap="butt"/>
<path d="M226.2,425.9C227.8,423.5 231.1,415.0 235.9,411.4C240.8,407.7 248.9,405.3 255.3,404.1C261.8,402.9 268.3,402.9 274.8,404.1C281.2,405.3 288.5,407.7 294.2,411.4C299.8,415.0 305.1,420.3 308.7,425.9C312.4,431.6 314.8,442.1 316.0,445.3" fill="none" stroke="#39352b" stroke-width="1.8" stroke-dasharray="3.4 1.0" opacity="0.9" stroke-linecap="butt"/>
<path d="M235.9,348.3C241.6,349.1 260.2,351.1 269.9,353.1C279.6,355.1 286.1,357.6 294.2,360.4C302.3,363.2 310.8,366.9 318.4,370.1C326.1,373.3 336.4,378.2 340.0,379.8" fill="none" stroke="#39352b" stroke-width="1.8" stroke-dasharray="3.4 1.0" opacity="0.9" stroke-linecap="butt"/>
<path d="M289.3,350.7C293.4,352.3 305.1,356.7 313.6,360.4C322.0,364.0 335.6,370.5 340.0,372.5" fill="none" stroke="#39352b" stroke-width="1.8" stroke-dasharray="3.4 1.0" opacity="0.9" stroke-linecap="butt"/>
<path d="M172.8,350.7C176.1,352.7 185.4,359.6 192.2,362.8C199.1,366.1 206.8,367.3 214.1,370.1C221.4,372.9 229.0,375.8 235.9,379.8C242.8,383.9 252.1,391.9 255.3,394.4" fill="none" stroke="#39352b" stroke-width="1.8" stroke-dasharray="3.4 1.0" opacity="0.65" stroke-linecap="butt"/>
<path d="M330.0,370.7C335.2,373.8 350.9,382.7 361.3,389.5C371.8,396.3 384.8,405.2 392.6,411.4C400.5,417.7 403.1,422.6 408.3,427.1C413.5,431.5 421.3,436.2 423.9,438.0" fill="none" stroke="#39352b" stroke-width="1.8" stroke-dasharray="3.4 1.0" opacity="0.9" stroke-linecap="butt"/>
<path d="M330.0,381.7C334.7,384.3 349.3,391.1 358.2,397.3C367.1,403.6 376.7,412.7 383.2,419.2C389.8,425.8 395.0,433.6 397.3,436.5" fill="none" stroke="#39352b" stroke-width="1.8" stroke-dasharray="3.4 1.0" opacity="0.65" stroke-linecap="butt"/>
<path d="M375.4,362.9L405.2,377.0L434.9,395.8" fill="none" stroke="#39352b" stroke-width="1.8" stroke-dasharray="3.4 1.0" opacity="0.9" stroke-linecap="butt"/>
<path d="M434.9,395.8L386.4,397.6" fill="none" stroke="#39352b" stroke-width="1.8" stroke-dasharray="3.4 1.0" opacity="0.9" stroke-linecap="butt"/>
<path d="M439.6,406.7L392.6,407.3" fill="none" stroke="#39352b" stroke-width="1.8" stroke-dasharray="3.4 1.0" opacity="0.9" stroke-linecap="butt"/>
<path d="M434.9,395.8C435.8,396.7 439.4,399.6 440.2,401.4C441.0,403.2 439.7,405.8 439.6,406.7" fill="none" stroke="#39352b" stroke-width="1.8" stroke-dasharray="3.4 1.0" opacity="0.9" stroke-linecap="butt"/>
<path d="M386.4,397.6C389.5,401.5 398.4,413.8 405.2,420.8C411.9,427.8 423.4,436.5 427.1,439.6" fill="none" stroke="#39352b" stroke-width="1.8" stroke-dasharray="3.4 1.0" opacity="0.9" stroke-linecap="butt"/>
<path d="M397.3,458.4C401.8,457.2 414.3,453.6 423.9,451.5C433.6,449.4 439.6,448.1 455.3,445.9C470.9,443.6 497.0,440.4 517.9,438.0C538.8,435.7 564.9,433.2 580.5,431.8C596.2,430.4 606.6,429.9 611.8,429.6" fill="none" stroke="#39352b" stroke-width="1.8" stroke-dasharray="3.4 1.0" opacity="0.9" stroke-linecap="butt"/>
<path d="M517.9,361.3L549.2,373.8L577.4,386.4" fill="none" stroke="#39352b" stroke-width="1.8" stroke-dasharray="3.4 1.0" opacity="0.9" stroke-linecap="butt"/>
<path d="M528.8,387.9L568.0,384.8" fill="none" stroke="#39352b" stroke-width="1.8" stroke-dasharray="3.4 1.0" opacity="0.9" stroke-linecap="butt"/>
<path d="M530.4,395.8L558.6,395.8" fill="none" stroke="#39352b" stroke-width="1.8" stroke-dasharray="3.4 1.0" opacity="0.9" stroke-linecap="butt"/>
<path d="M528.8,387.9C528.5,388.6 526.4,390.7 526.6,392.0C526.9,393.3 529.8,395.1 530.4,395.8" fill="none" stroke="#39352b" stroke-width="1.8" stroke-dasharray="3.4 1.0" opacity="0.9" stroke-linecap="butt"/>
<path d="M571.1,389.5C574.2,391.8 584.7,398.4 589.9,403.6C595.1,408.8 600.3,417.9 602.4,420.8" fill="none" stroke="#39352b" stroke-width="1.8" stroke-dasharray="3.4 1.0" opacity="0.9" stroke-linecap="butt"/>
<path d="M467.8,336.9C474.0,338.9 491.8,344.2 505.4,348.8C518.9,353.4 536.7,359.2 549.2,364.4C561.7,369.7 571.1,373.8 580.5,380.1C589.9,386.4 599.3,395.2 605.6,402.0C611.8,408.8 616.0,417.7 618.1,420.8" fill="none" stroke="#39352b" stroke-width="1.8" stroke-dasharray="3.4 1.0" opacity="0.85" stroke-linecap="butt"/>
<path d="M517.9,358.8C524.1,361.1 544.5,367.4 555.5,372.3C566.4,377.1 575.8,382.2 583.6,387.9C591.5,393.7 597.5,400.7 602.4,406.7C607.4,412.7 611.6,421.1 613.4,423.9" fill="none" stroke="#39352b" stroke-width="1.8" stroke-dasharray="3.4 1.0" opacity="0.6" stroke-linecap="butt"/>
<path d="M458.4,349L458.4,421" stroke="#5f8796" stroke-width="1" stroke-dasharray="1.5 3" opacity="0.35" fill="none"/>
<path d="M300.0,476.0C300.7,480.0 303.0,491.0 304.0,500.0C305.0,509.0 305.0,520.7 306.0,530.0C307.0,539.3 309.3,551.7 310.0,556.0" fill="none" stroke="#39352b" stroke-width="1.8" stroke-dasharray="3.4 1.0" opacity="0.7999999999999999" stroke-linecap="butt"/>
<path d="M410.0,500.0C411.7,502.5 415.0,511.3 420.0,515.0C425.0,518.7 431.7,521.2 440.0,522.0C448.3,522.8 462.0,520.8 470.0,520.0C478.0,519.2 485.0,517.5 488.0,517.0" fill="none" stroke="#39352b" stroke-width="1.8" stroke-dasharray="3.4 1.0" opacity="0.7" stroke-linecap="butt"/>
<path d="M405.0,535.0C410.8,534.7 426.2,534.2 440.0,533.0C453.8,531.8 480.0,528.8 488.0,528.0" fill="none" stroke="#39352b" stroke-width="1.8" stroke-dasharray="3.4 1.0" opacity="0.7" stroke-linecap="butt"/>
</g>
<path d="M118.0,304.0C120.2,301.3 122.3,299.8 126.0,298.0C129.7,296.2 135.0,294.3 140.0,293.0C145.0,291.7 151.7,291.5 156.0,290.0C160.3,288.5 162.0,286.3 166.0,284.0C170.0,281.7 175.3,278.5 180.0,276.0C184.7,273.5 189.3,270.8 194.0,269.0C198.7,267.2 202.3,266.2 208.0,265.0C213.7,263.8 219.3,262.8 228.0,262.0C236.7,261.2 248.3,260.4 260.0,260.0C271.7,259.6 286.7,259.0 298.0,259.5C309.3,260.0 318.0,261.8 328.0,263.0C338.0,264.2 349.7,265.7 358.0,267.0C366.3,268.3 372.3,269.5 378.0,271.0C383.7,272.5 387.3,273.8 392.0,276.0C396.7,278.2 401.0,280.7 406.0,284.0C411.0,287.3 417.3,292.0 422.0,296.0C426.7,300.0 430.0,304.3 434.0,308.0C438.0,311.7 443.0,317.0 446.0,318.0C449.0,319.0 450.0,314.8 452.0,314.0C454.0,313.2 455.8,313.0 458.0,313.5C460.2,314.0 463.4,315.4 465.0,317.0C466.6,318.6 467.4,321.0 467.6,323.0C467.8,325.0 466.9,327.5 466.0,329.0C465.1,330.5 463.0,331.0 462.0,332.0C461.0,333.0 457.3,333.5 460.0,335.0C462.7,336.5 472.0,339.0 478.0,341.0C484.0,343.0 489.7,344.8 496.0,347.0C502.3,349.2 509.3,351.7 516.0,354.0C522.7,356.3 529.3,358.7 536.0,361.0C542.7,363.3 549.3,365.3 556.0,368.0C562.7,370.7 570.0,373.8 576.0,377.0C582.0,380.2 587.7,383.8 592.0,387.0C596.3,390.2 599.3,393.5 602.0,396.0C604.7,398.5 605.3,399.3 608.0,402.0C610.7,404.7 615.3,408.3 618.0,412.0C620.7,415.7 622.7,420.0 624.0,424.0C625.3,428.0 625.7,431.3 626.0,436.0C626.3,440.7 626.2,446.0 626.0,452.0C625.8,458.0 625.7,465.7 625.0,472.0C624.3,478.3 623.0,485.7 622.0,490.0C621.0,494.3 618.7,495.0 619.0,498.0C619.3,501.0 622.3,504.0 624.0,508.0C625.7,512.0 628.3,518.0 629.0,522.0C629.7,526.0 629.2,528.7 628.0,532.0C626.8,535.3 624.0,538.8 622.0,542.0C620.0,545.2 620.3,549.0 616.0,551.0C611.7,553.0 605.7,551.5 596.0,554.0C586.3,556.5 571.0,562.5 558.0,566.0C545.0,569.5 531.3,572.7 518.0,575.0C504.7,577.3 488.3,578.7 478.0,580.0C467.7,581.3 462.0,581.4 456.0,583.0C450.0,584.6 448.3,588.9 442.0,589.6C435.7,590.3 425.3,587.8 418.0,587.0C410.7,586.2 404.3,585.3 398.0,585.0C391.7,584.7 386.3,585.3 380.0,585.0C373.7,584.7 366.7,583.8 360.0,583.0C353.3,582.2 346.7,581.5 340.0,580.0C333.3,578.5 325.7,575.8 320.0,574.0C314.3,572.2 311.0,569.7 306.0,569.0C301.0,568.3 296.0,570.0 290.0,570.0C284.0,570.0 276.0,570.0 270.0,569.0C264.0,568.0 258.3,566.5 254.0,564.0C249.7,561.5 247.0,558.0 244.0,554.0C241.0,550.0 238.0,545.0 236.0,540.0C234.0,535.0 233.0,529.3 232.0,524.0C231.0,518.7 232.0,512.7 230.0,508.0C228.0,503.3 225.0,500.3 220.0,496.0C215.0,491.7 206.7,487.0 200.0,482.0C193.3,477.0 186.7,471.7 180.0,466.0C173.3,460.3 165.7,452.8 160.0,448.0C154.3,443.2 150.7,439.2 146.0,437.0C141.3,434.8 136.3,435.8 132.0,435.0C127.7,434.2 122.8,433.5 120.0,432.0C117.2,430.5 116.3,429.0 115.0,426.0C113.7,423.0 113.0,418.0 112.0,414.0C111.0,410.0 109.7,406.0 109.0,402.0C108.3,398.0 108.3,395.3 108.0,390.0C107.7,384.7 107.0,376.7 107.0,370.0C107.0,363.3 107.5,356.7 108.0,350.0C108.5,343.3 109.2,336.0 110.0,330.0C110.8,324.0 111.7,318.3 113.0,314.0C114.3,309.7 115.8,306.7 118.0,304.0Z" fill="none" stroke="#35362f" stroke-width="1.3" stroke-dasharray="3.4 1" opacity="0.8"/>

</svg>
</body></html>
